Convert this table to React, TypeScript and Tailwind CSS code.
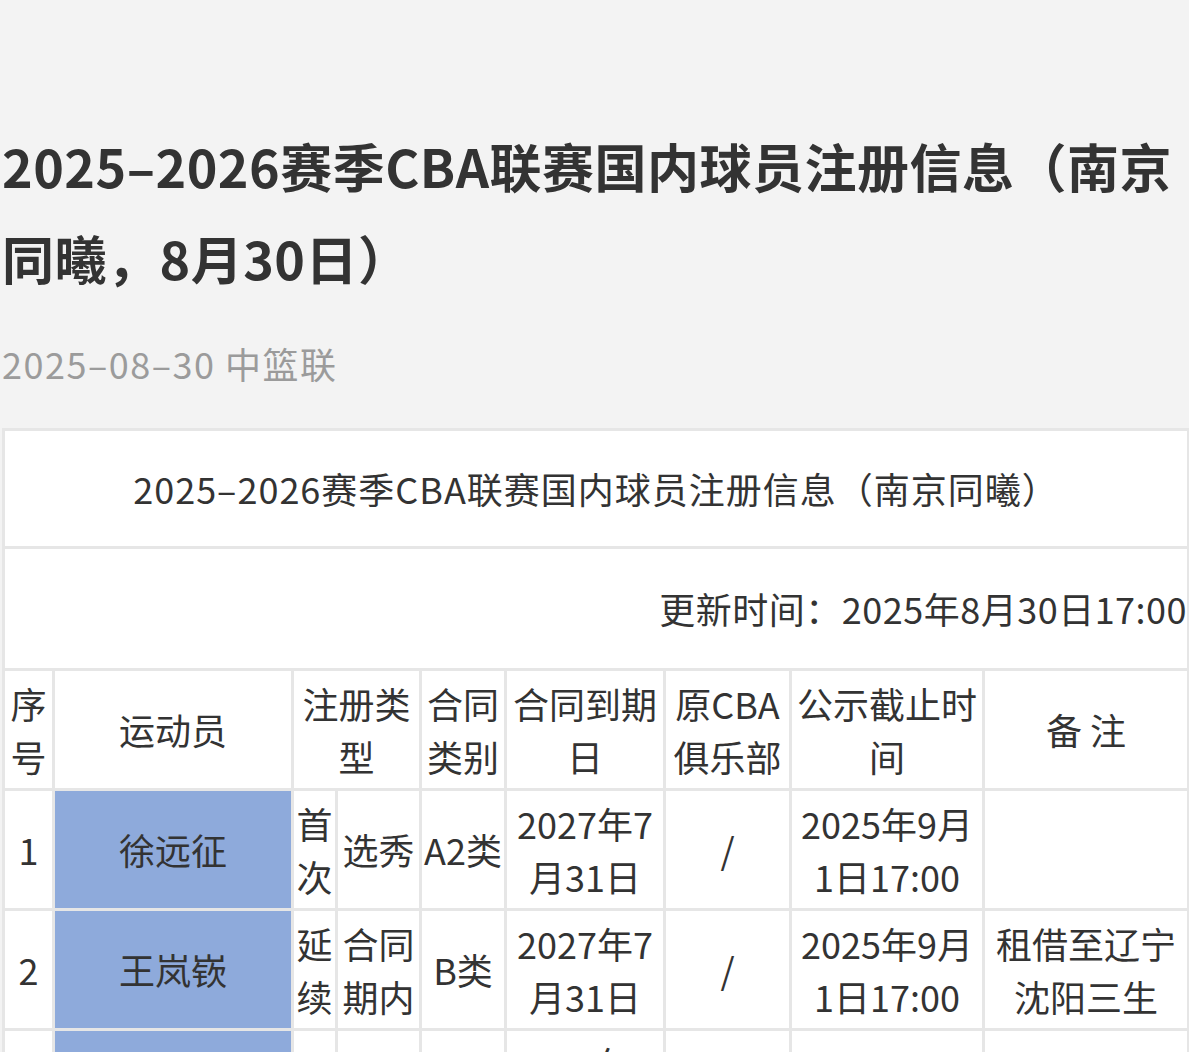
const rows = [
  {
    no: "1",
    name: "徐远征",
    kind: "首次",
    sub: "选秀",
    cls: "A2类",
    end: "2027年7月31日",
    club: "/",
    deadline: "2025年9月1日17:00",
    note: "",
  },
  {
    no: "2",
    name: "王岚嵚",
    kind: "延续",
    sub: "合同期内",
    cls: "B类",
    end: "2027年7月31日",
    club: "/",
    deadline: "2025年9月1日17:00",
    note: "租借至辽宁沈阳三生",
  },
];

const cell = "border-[3px] border-[#e6e6e6] px-[3px] py-0 text-center align-middle";

export default function App() {
  return (
    <div
      className="min-h-screen bg-[#f3f3f3] text-[#333] pt-[120px] pb-10"
      style={{ fontFamily: '"Noto Sans CJK SC", "Noto Sans", sans-serif' }}
    >
      <h1 className="pl-[2px] pr-[2px] text-[52px] leading-[92px] font-bold tracking-[0.5px] text-[#333]">
        2025–2026赛季CBA联赛国内球员注册信息（南京同曦，8月30日）
      </h1>
      <div className="mt-[33px] pl-[2px] text-[36px] leading-[52px] tracking-[1.5px] text-[#9b9b9b]">
        2025–08–30 中篮联
      </div>

      <table className="mt-[39px] ml-[2px] w-[1185px] table-fixed border-collapse bg-white text-[36px] leading-[53px] text-[#333]">
        <colgroup>
          <col className="w-[50px]" />
          <col className="w-[239px]" />
          <col className="w-[44px]" />
          <col className="w-[84px]" />
          <col className="w-[85px]" />
          <col className="w-[159px]" />
          <col className="w-[126px]" />
          <col className="w-[193px]" />
          <col className="w-[205px]" />
        </colgroup>
        <tbody>
          <tr className="h-[118px]">
            <td colSpan={9} className={`${cell} tracking-[1px]`}>
              2025–2026赛季CBA联赛国内球员注册信息（南京同曦）
            </td>
          </tr>
          <tr className="h-[122px]">
            <td colSpan={9} className={`${cell} !text-right !pr-0 tracking-[0.5px]`}>
              更新时间：2025年8月30日17:00
            </td>
          </tr>
          <tr className="h-[120px]">
            <td className={cell}>序号</td>
            <td className={cell}>运动员</td>
            <td colSpan={2} className={cell}>
              注册类型
            </td>
            <td className={cell}>合同类别</td>
            <td className={cell}>合同到期日</td>
            <td className={cell}>原CBA俱乐部</td>
            <td className={cell}>公示截止时间</td>
            <td className={cell}>备&nbsp;注</td>
          </tr>
          {rows.map((r) => (
            <tr key={r.no} className="h-[120px]">
              <td className={cell}>{r.no}</td>
              <td className={`${cell} bg-[#8eaadb]`}>{r.name}</td>
              <td className={`${cell} !px-0`}>{r.kind}</td>
              <td className={`${cell} !px-0`}>{r.sub}</td>
              <td className={`${cell} !px-0`}>{r.cls}</td>
              <td className={cell}>{r.end}</td>
              <td className={cell}>{r.club}</td>
              <td className={cell}>{r.deadline}</td>
              <td className={cell}>{r.note}</td>
            </tr>
          ))}
          <tr className="h-[120px]">
            <td className={cell}></td>
            <td className={`${cell} bg-[#8eaadb]`}></td>
            <td className={cell}></td>
            <td className={cell}></td>
            <td className={cell}></td>
            <td className={cell}>2027年7月31日</td>
            <td className={cell}></td>
            <td className={cell}></td>
            <td className={cell}></td>
          </tr>
        </tbody>
      </table>
    </div>
  );
}
